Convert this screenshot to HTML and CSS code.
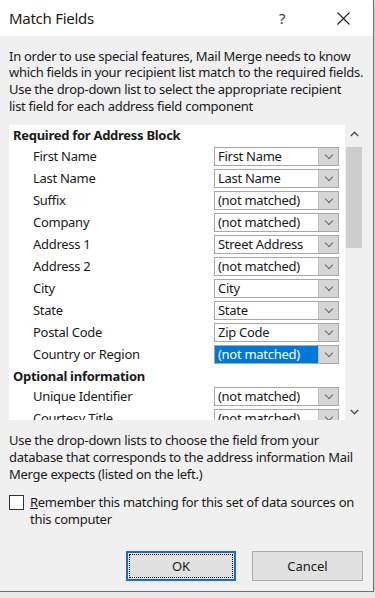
FILE: index.html
```html
<!DOCTYPE html>
<html lang="en">
<head>
  <meta charset="UTF-8" />
  <title>Match Fields</title>
  <link rel="stylesheet" href="styles.css">
</head>
<body>
  <div class="dialog">
    <div class="titlebar">
      <span class="title">Match Fields</span>
      <span class="help">?</span>
      <span class="close">
        <svg width="13" height="13" viewBox="0 0 13 13"><path d="M0.5 0.5L12.5 12.5M12.5 0.5L0.5 12.5" stroke="#222" stroke-width="1.1" fill="none"/></svg>
      </span>
    </div>

    <div class="content">
      <p class="intro">In order to use special features, Mail Merge needs to know<br>which fields in your recipient list match to the required fields.<br>Use the drop-down list to select the appropriate recipient<br>list field for each address field component</p>

      <div class="listbox">
        <div class="rows">
          <div class="group first">Required for Address Block</div>
          <div class="row"><span class="label">First Name</span><div class="combo"><span class="value">First Name</span><span class="arrow"></span></div></div>
          <div class="row"><span class="label">Last Name</span><div class="combo"><span class="value">Last Name</span><span class="arrow"></span></div></div>
          <div class="row"><span class="label">Suffix</span><div class="combo"><span class="value">(not matched)</span><span class="arrow"></span></div></div>
          <div class="row"><span class="label">Company</span><div class="combo"><span class="value">(not matched)</span><span class="arrow"></span></div></div>
          <div class="row"><span class="label">Address 1</span><div class="combo"><span class="value">Street Address</span><span class="arrow"></span></div></div>
          <div class="row"><span class="label">Address 2</span><div class="combo"><span class="value">(not matched)</span><span class="arrow"></span></div></div>
          <div class="row"><span class="label">City</span><div class="combo"><span class="value">City</span><span class="arrow"></span></div></div>
          <div class="row"><span class="label">State</span><div class="combo"><span class="value">State</span><span class="arrow"></span></div></div>
          <div class="row"><span class="label">Postal Code</span><div class="combo"><span class="value">Zip Code</span><span class="arrow"></span></div></div>
          <div class="row"><span class="label">Country or Region</span><div class="combo"><span class="value selected">(not matched)</span><span class="arrow"></span></div></div>
          <div class="group">Optional information</div>
          <div class="row"><span class="label">Unique Identifier</span><div class="combo"><span class="value">(not matched)</span><span class="arrow"></span></div></div>
          <div class="row"><span class="label">Courtesy Title</span><div class="combo"><span class="value">(not matched)</span><span class="arrow"></span></div></div>
        </div>
        <div class="scrollbar">
          <span class="step">
            <svg width="9" height="6" viewBox="0 0 9 6"><path d="M0.8 5L4.5 1.3L8.2 5" stroke="#555" stroke-width="1.6" fill="none"/></svg>
          </span>
          <span class="thumb"></span>
          <span class="track"></span>
          <span class="step">
            <svg width="9" height="6" viewBox="0 0 9 6"><path d="M0.8 1L4.5 4.7L8.2 1" stroke="#555" stroke-width="1.6" fill="none"/></svg>
          </span>
        </div>
      </div>

      <p class="hint">Use the drop-down lists to choose the field from your<br>database that corresponds to the address information Mail<br>Merge expects (listed on the left.)</p>

      <label class="check">
        <span class="box"></span>
        <span class="check-text"><u>R</u>emember this matching for this set of data sources on<br>this computer</span>
      </label>

      <div class="buttons">
        <button class="btn default"><span class="focus">OK</span></button>
        <button class="btn">Cancel</button>
      </div>
    </div>
  </div>
</body>
</html>
```

FILE: styles.css
```css
:root {
  --face: #f0f0f0;
  --text: #1a1a1a;
  --border: #a8a8a8;
  --accent: #0078d7;
}

body {
  margin: 0;
  background: #e9e9e9;
  font-family: "Segoe UI", "Noto Sans", sans-serif;
  font-size: 13px;
  letter-spacing: -0.28px;
  color: var(--text);
}

.dialog {
  width: 374px;
  height: 592px;
  box-sizing: border-box;
  background: var(--face);
  border-right: 1px solid #707070;
  border-bottom: 1px solid #707070;
  box-shadow: 0 2px 6px rgba(0,0,0,0.25);
  display: flex;
  flex-direction: column;
}

.titlebar {
  height: 36px;
  background: #fff;
  display: flex;
  align-items: center;
  padding-left: 9px;
}

.title {
  font-size: 15px;
  flex: 1;
  padding-bottom: 1px;
}

.help {
  font-size: 15px;
  width: 14px;
  margin-right: 44px;
  color: #333;
}

.close {
  display: flex;
  width: 13px;
  margin-right: 23px;
}

.content {
  padding: 0 10px 0 9px;
}

.intro,
.hint {
  margin: 0;
  line-height: 16.67px;
  white-space: nowrap;
}

.intro {
  padding-top: 11.5px;
}

.listbox {
  margin-top: 11px;
  height: 295px;
  display: flex;
  overflow: hidden;
  width: 353px;
}

.rows {
  flex: 1;
  background: #fff;
}

.group {
  font-weight: bold;
  height: 20px;
  line-height: 20px;
  padding-left: 4px;
}

.group.first {
  height: 21px;
}

.row {
  height: 22px;
  display: flex;
  align-items: flex-start;
}

.label {
  width: 181px;
  padding-left: 24px;
  line-height: 20px;
}

.combo {
  margin-top: 1px;
  width: 125px;
  height: 19px;
  box-sizing: border-box;
  border: 1px solid var(--border);
  display: flex;
  background: #fff;
}

.value {
  flex: 1;
  padding-left: 3px;
  line-height: 17px;
  white-space: nowrap;
  overflow: hidden;
}

.value.selected {
  background: var(--accent);
  color: #fff;
}

.arrow {
  width: 19px;
  background: #d6d6d6;
  border-left: 1px solid #c0c0c0;
  display: flex;
  align-items: center;
  justify-content: center;
}

.arrow::before {
  content: "";
  width: 5px;
  height: 5px;
  border-right: 1px solid #666;
  border-bottom: 1px solid #666;
  transform: translateY(-2px) rotate(45deg);
}

.scrollbar {
  width: 17px;
  display: flex;
  flex-direction: column;
  background: var(--face);
}

.step {
  height: 17px;
  display: flex;
  align-items: center;
  justify-content: center;
  padding-left: 1px;
}

.thumb {
  height: 101px;
  margin: 5px 0 0 1px;
  background: #cdcdcd;
}

.track {
  flex: 1;
}

.hint {
  margin-top: 12px;
}

.check {
  display: flex;
  margin-top: 12px;
  line-height: 16.67px;
  white-space: nowrap;
}

.box {
  width: 13px;
  height: 13px;
  flex: none;
  border: 1px solid #333;
  background: #fff;
  margin: 1px 6px 0 0;
}

.buttons {
  display: flex;
  justify-content: flex-end;
  gap: 16px;
  margin-top: 23px;
}

.btn {
  width: 111px;
  height: 30px;
  font: inherit;
  color: var(--text);
  background: #e1e1e1;
  border: 1px solid #adadad;
  padding: 0;
}

.btn.default {
  width: 110px;
  border: 2px solid #1e6cb8;
  padding: 1px;
}

.focus {
  display: flex;
  align-items: center;
  justify-content: center;
  height: 100%;
  box-sizing: border-box;
  border: 1px dotted #000;
}
```
